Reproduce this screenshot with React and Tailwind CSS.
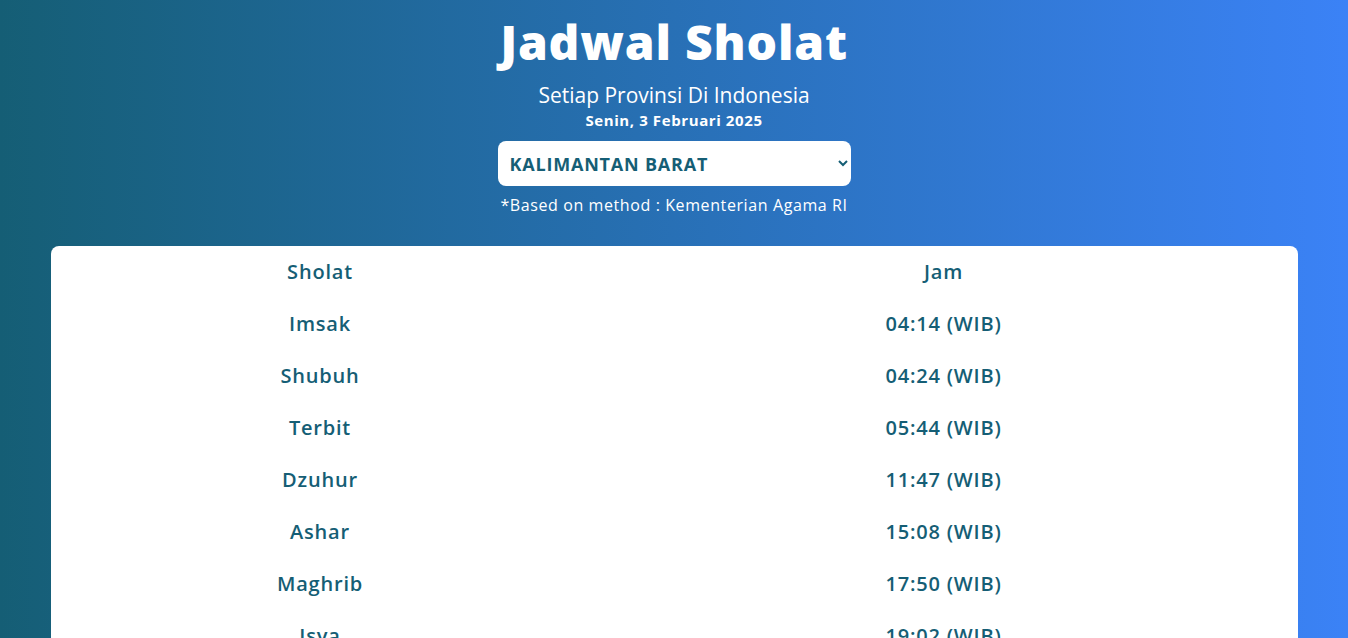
import { useState } from 'react'

const PROVINSI = ['ACEH', 'SUMATERA UTARA', 'KALIMANTAN BARAT', 'KALIMANTAN TENGAH', 'DKI JAKARTA']

const JADWAL = [
  { nama: 'Imsak', jam: '04:14' },
  { nama: 'Shubuh', jam: '04:24' },
  { nama: 'Terbit', jam: '05:44' },
  { nama: 'Dzuhur', jam: '11:47' },
  { nama: 'Ashar', jam: '15:08' },
  { nama: 'Maghrib', jam: '17:50' },
  { nama: 'Isya', jam: '19:02' }
]

export default function App() {
  const [provinsi, setProvinsi] = useState('KALIMANTAN BARAT')

  return (
    <div
      className="min-h-screen bg-[linear-gradient(to_right,#155e75,#3b82f6)] pb-10"
      style={{ fontFamily: '"Open Sans", "DejaVu Sans", sans-serif' }}
    >
      <header className="flex flex-col items-center pt-[14px] text-white">
        <h1 className="text-[48px] font-extrabold leading-[56px] tracking-[0.8px]">Jadwal Sholat</h1>
        <p className="mt-[12px] text-[21px] leading-[26px]">Setiap Provinsi Di Indonesia</p>
        <p className="mt-[1px] text-[15px] font-bold leading-[22px] tracking-[0.6px]">Senin, 3 Februari 2025</p>
        <select
          value={provinsi}
          onChange={(e) => setProvinsi(e.target.value)}
          className="mt-[10px] h-[45px] w-[353px] rounded-lg bg-white pl-2 pr-2 text-[18px] font-bold tracking-[0.8px] text-[#155e75] outline-none"
        >
          {PROVINSI.map((p) => (
            <option key={p} value={p}>
              {p}
            </option>
          ))}
        </select>
        <p className="mt-[8px] text-[16px] leading-[22px] tracking-[0.6px]">*Based on method : Kementerian Agama RI</p>
      </header>

      <div className="ml-[51px] mr-[50px] mt-[30px] rounded-lg bg-white text-[#155e75]">
        <div className="grid grid-cols-[538px_1fr] text-center text-[20px] font-semibold tracking-[0.8px]">
          <div className="flex h-[52px] items-center justify-center">Sholat</div>
          <div className="flex h-[52px] items-center justify-center">Jam</div>
          {JADWAL.map((j) => (
            <>
              <div key={j.nama} className="flex h-[52px] items-center justify-center">
                {j.nama}
              </div>
              <div key={j.nama + '-jam'} className="flex h-[52px] items-center justify-center">
                {j.jam} (WIB)
              </div>
            </>
          ))}
        </div>
      </div>
    </div>
  )
}
